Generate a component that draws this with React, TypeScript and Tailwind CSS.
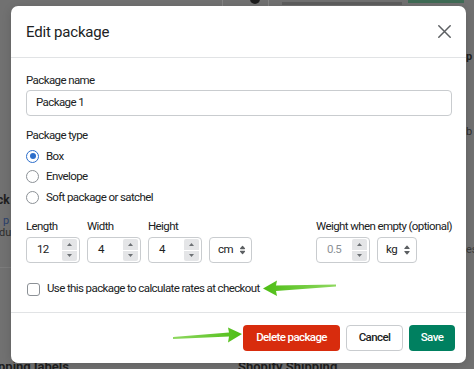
import React from "react";

function Spinner() {
  return (
    <div className="flex flex-col gap-[1px] w-[15px]">
      <div className="h-[10.5px] bg-[#e4e5e7] rounded-t-[2px] flex items-center justify-center">
        <svg width="5" height="3" viewBox="0 0 5 3"><path d="M2.5 0L5 3H0z" fill="#6d7175" /></svg>
      </div>
      <div className="h-[10.5px] bg-[#e4e5e7] rounded-b-[2px] flex items-center justify-center">
        <svg width="5" height="3" viewBox="0 0 5 3"><path d="M0 0H5L2.5 3z" fill="#6d7175" /></svg>
      </div>
    </div>
  );
}

function NumInput({ value, disabled }: { value: string; disabled?: boolean }) {
  return (
    <div className="w-[54px] h-[26px] border border-[#c9cccf] rounded-[4px] flex items-center justify-between pl-[10px] pr-[2px] bg-white">
      <span className={disabled ? "text-[#8c9196]" : "text-[#202223]"}>{value}</span>
      <Spinner />
    </div>
  );
}

function SelectIcon() {
  return (
    <svg width="20" height="20" viewBox="0 0 20 20" className="w-[18px] h-[18px]">
      <path
        d="M7.676 9h4.648c.563 0 .879-.603.53-1.014l-2.323-2.746a.708.708 0 0 0-1.062 0l-2.324 2.746c-.347.411-.032 1.014.531 1.014Zm4.648 2h-4.648c-.563 0-.878.603-.53 1.014l2.323 2.746c.27.32.792.32 1.062 0l2.323-2.746c.349-.411.033-1.014-.53-1.014Z"
        fill="#5c5f62"
      />
    </svg>
  );
}

function Select({ value, w }: { value: string; w: string }) {
  return (
    <div className={`${w} h-[26px] border border-[#c9cccf] rounded-[4px] flex items-center pl-[8px] gap-[1px] bg-white`}>
      <span>{value}</span>
      <SelectIcon />
    </div>
  );
}

function Radio({ label, checked }: { label: string; checked?: boolean }) {
  return (
    <div className="h-[20.5px] flex items-center gap-[7px]">
      {checked ? (
        <div className="w-[13px] h-[13px] rounded-full border-[1.5px] border-[#2c6ecb] flex items-center justify-center">
          <div className="w-[6px] h-[6px] rounded-full bg-[#2c6ecb]" />
        </div>
      ) : (
        <div className="w-[13px] h-[13px] rounded-full border-[1.5px] border-[#8c9196]" />
      )}
      <span>{label}</span>
    </div>
  );
}

export default function App() {
  return (
    <div className="relative w-[474px] h-[369px] overflow-hidden bg-[#717171] font-[Roboto,'Liberation_Sans',sans-serif]">
      {/* background page fragments under the overlay */}
      <div className="absolute left-[222px] top-0 w-[1px] h-[6px] bg-[#858585]" />
      <div className="absolute left-[250px] top-[-6px] w-[10px] h-[10px] rounded-full bg-[#1c1c1c]" />
      <div className="absolute left-[268px] top-0 w-[1px] h-[6px] bg-[#858585]" />
      <div className="absolute left-[282px] top-[2px] w-[120px] h-[3px] bg-[#5e5e5e]" />
      <div className="absolute left-[408px] top-0 w-[56px] h-[3px] bg-[#3f6b55]" />
      <div className="absolute left-0 top-[193px] text-[12px] font-bold text-[#1e1e1e] leading-[14px] ml-[-3px]">ck</div>
      <div className="absolute left-[3px] top-[215px] text-[11px] text-[#2a3f6b] leading-[12px]">p</div>
      <div className="absolute left-0 top-[227px] text-[11px] text-[#2e2e2e] leading-[12px] ml-[-1px]">du</div>
      <div className="absolute left-[466px] top-[51px] text-[11px] font-bold text-[#1e1e1e] leading-[12px]">p</div>
      <div className="absolute left-[466px] top-[126px] text-[11px] text-[#2e2e2e] leading-[12px]">b</div>
      <div className="absolute left-[466px] top-[244px] text-[11px] text-[#3a3a3a] leading-[12px]">es</div>
      <div className="absolute left-0 top-[267px] w-[11px] h-[1px] bg-[#7c7c7c]" />
      <div className="absolute left-[-2px] top-[360px] text-[13px] font-bold text-[#1e1e1e] leading-[14px]">pping labels</div>
      <div className="absolute left-[238px] top-[360px] text-[13px] font-bold text-[#1e1e1e] leading-[14px]">Shopify Shipping</div>

      {/* modal */}
      <div className="absolute left-[11px] top-[6px] w-[455px] h-[357px] bg-white rounded-[7px] flex flex-col text-[11.5px] tracking-[-0.6px] text-[#202223] shadow-[0_2px_10px_rgba(0,0,0,0.15)]">
        <div className="h-[52px] shrink-0 border-b border-[#e1e3e5] flex items-center justify-between pl-[15px] pr-[14px]">
          <span className="text-[15px] tracking-[-0.2px] text-[#202223] mt-[1px]">Edit package</span>
          <svg width="13" height="13" viewBox="0 0 13 13" className="mr-[1px]">
            <path d="M0.8 0.8L12.2 12.2M12.2 0.8L0.8 12.2" stroke="#5c5f62" strokeWidth="1.5" strokeLinecap="round" />
          </svg>
        </div>

        <div className="flex-1 flex flex-col pl-[15px] pr-[14px] pt-[14px]">
          <div className="leading-[16px]">Package name</div>
          <div className="mt-[2px] h-[26px] border border-[#c9cccf] rounded-[4px] flex items-center px-[9px]">Package 1</div>

          <div className="mt-[11px] leading-[16px]">Package type</div>
          <div className="mt-[3px] flex flex-col">
            <Radio label="Box" checked />
            <Radio label="Envelope" />
            <Radio label="Soft package or satchel" />
          </div>

          <div className="mt-[10.5px] flex justify-between">
            <div className="flex gap-[7px]">
              <div className="flex flex-col">
                <div className="leading-[16px]">Length</div>
                <div className="mt-[3px]"><NumInput value="12" /></div>
              </div>
              <div className="flex flex-col">
                <div className="leading-[16px]">Width</div>
                <div className="mt-[3px]"><NumInput value="4" /></div>
              </div>
              <div className="flex flex-col">
                <div className="leading-[16px]">Height</div>
                <div className="mt-[3px]"><NumInput value="4" /></div>
              </div>
              <div className="flex flex-col">
                <div className="leading-[16px]">&nbsp;</div>
                <div className="mt-[3px]"><Select value="cm" w="w-[43px]" /></div>
              </div>
            </div>
            <div className="flex flex-col">
              <div className="leading-[16px]">Weight when empty (optional)</div>
              <div className="mt-[3px] flex gap-[7px]">
                <NumInput value="0.5" disabled />
                <Select value="kg" w="w-[40px]" />
              </div>
            </div>
          </div>

          <div className="mt-[16px] h-[20px] flex items-center gap-[7px]">
            <div className="w-[13px] h-[13px] ml-[1px] rounded-[3px] border-[1.5px] border-[#8c9196]" />
            <span>Use this package to calculate rates at checkout</span>
          </div>
        </div>

        <div className="h-[51px] shrink-0 border-t border-[#e1e3e5] flex items-center justify-end gap-[6px] pr-[11px]">
          <button className="w-[97px] h-[26px] rounded-[4px] bg-[#d82c0d] text-white font-medium">Delete package</button>
          <button className="w-[57px] h-[26px] rounded-[4px] bg-white border border-[#c9cccf] text-[#202223] font-medium">Cancel</button>
          <button className="w-[46px] h-[26px] rounded-[4px] bg-[#008060] text-white font-medium">Save</button>
        </div>
      </div>

      {/* annotation arrows */}
      <svg className="absolute left-0 top-0 pointer-events-none" width="474" height="369" viewBox="0 0 474 369">
        <defs>
          <linearGradient id="g1" x1="263" y1="0" x2="336" y2="0" gradientUnits="userSpaceOnUse">
            <stop offset="0" stopColor="#4dbd14" />
            <stop offset="1" stopColor="#8fd860" />
          </linearGradient>
          <linearGradient id="g2" x1="173" y1="0" x2="242" y2="0" gradientUnits="userSpaceOnUse">
            <stop offset="0" stopColor="#8fd860" />
            <stop offset="1" stopColor="#4dbd14" />
          </linearGradient>
        </defs>
        <polygon points="263,288.5 277,280.5 276,285.5 336,284.5 336,286.5 276,291 277,296" fill="url(#g1)" />
        <polygon points="242,334 228,327.5 229,332.5 173,337 173,339 229,336.5 228,342.5" fill="url(#g2)" />
      </svg>
    </div>
  );
}
